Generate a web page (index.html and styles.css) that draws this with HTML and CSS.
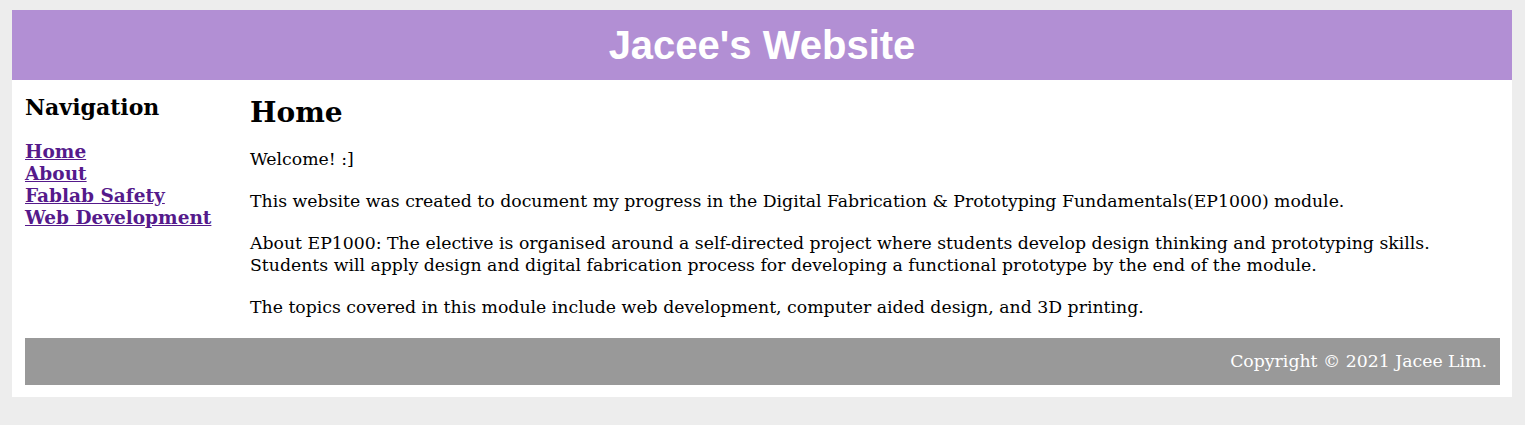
FILE: index.html
```html
<!DOCTYPE html>
<html lang="en">
<head>
<meta charset="utf-8">
<title>Jacee's Website</title>
<link rel="stylesheet" href="styles.css">
</head>
<body>
<div class="page">
  <header class="site-header">
    <h1 class="site-title">Jacee's Website</h1>
  </header>
  <div class="body-wrap">
    <div class="columns">
      <nav class="nav">
        <h3 class="nav-title">Navigation</h3>
        <ul class="nav-list">
          <li><a href="#">Home</a></li>
          <li><a href="#">About</a></li>
          <li><a href="#">Fablab Safety</a></li>
          <li><a href="#">Web Development</a></li>
        </ul>
      </nav>
      <main class="content">
        <h2 class="content-title">Home</h2>
        <p>Welcome! :]</p>
        <p>This website was created to document my progress in the Digital Fabrication &amp; Prototyping Fundamentals(EP1000) module.</p>
        <p>About EP1000: The elective is organised around a self-directed project where students develop design thinking and prototyping skills.<br>Students will apply design and digital fabrication process for developing a functional prototype by the end of the module.</p>
        <p>The topics covered in this module include web development, computer aided design, and 3D printing.</p>
      </main>
    </div>
    <footer class="site-footer">Copyright &copy; 2021 Jacee Lim.</footer>
  </div>
</div>
</body>
</html>
```
FILE: styles.css
```css
html, body {
  margin: 0;
  padding: 0;
}
body {
  background: #ededed;
  font-family: "DejaVu Serif", Georgia, serif;
  font-size: 17.3px;
  color: #000;
}
.page {
  margin: 10px 13px 0 12px;
  background: #fff;
}
.site-header {
  background: #b28fd4;
  padding: 12px 0;
}
.site-title {
  margin: 0;
  text-align: center;
  color: #fff;
  font-family: "Liberation Sans", Arial, sans-serif;
  font-weight: bold;
  font-size: 40px;
  line-height: 46px;
}
.body-wrap {
  padding: 12px 12px 12px 13px;
}
.columns {
  display: grid;
  grid-template-columns: 225px 1fr;
}
.nav-title {
  margin: 1px 0 20px;
  font-size: 22px;
  line-height: 28px;
}
.nav-list {
  list-style: none;
  margin: 0;
  padding: 0;
  font-size: 18.5px;
  font-weight: bold;
  line-height: 22px;
}
.nav-list a {
  color: #551a8b;
}
.content-title {
  margin: 4px 0 18px;
  font-size: 28px;
  line-height: 34px;
}
.content p {
  margin: 0 0 20px;
  line-height: 22px;
}
.site-footer {
  background: #999;
  color: #fff;
  text-align: right;
  padding: 12px 13px 12px 0;
  line-height: 23px;
}
```
